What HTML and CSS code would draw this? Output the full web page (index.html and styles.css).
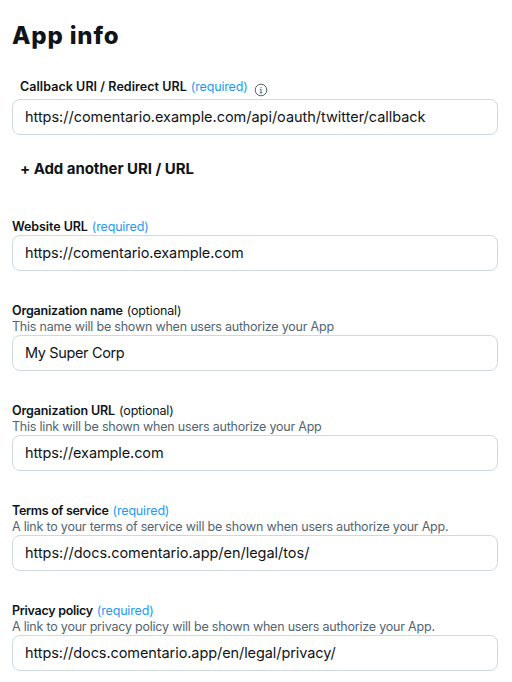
FILE: index.html
```html
<!DOCTYPE html>
<html lang="en">
<head>
<meta charset="utf-8">
<title>App info</title>
<link rel="stylesheet" href="styles.css">
</head>
<body>
<main class="form">
<h1 class="title">App info</h1>
<section class="field callback">
<div class="label"><span class="name">Callback URI / Redirect URL</span><span class="required">(required)</span><svg class="info" viewBox="0 0 14 14"><circle cx="7" cy="7" r="5.8"/><path d="M7 6.2v3.8M5.8 6.3H7M5.7 9.9h2.6M7 3.9v1"/></svg></div>
<div class="input">https://comentario.example.com/api/oauth/twitter/callback</div>
</section>
<div class="add">+ Add another URI / URL</div>
<section class="field website">
<div class="label"><span class="name">Website URL</span><span class="required">(required)</span></div>
<div class="input">https://comentario.example.com</div>
</section>
<section class="field org-name">
<div class="label"><span class="name">Organization name</span><span class="optional">(optional)</span></div>
<div class="hint">This name will be shown when users authorize your App</div>
<div class="input">My Super Corp</div>
</section>
<section class="field org-url">
<div class="label"><span class="name">Organization URL</span><span class="optional">(optional)</span></div>
<div class="hint">This link will be shown when users authorize your App</div>
<div class="input">https://example.com</div>
</section>
<section class="field terms">
<div class="label"><span class="name">Terms of service</span><span class="required">(required)</span></div>
<div class="hint">A link to your terms of service will be shown when users authorize your App.</div>
<div class="input">https://docs.comentario.app/en/legal/tos/</div>
</section>
<section class="field privacy">
<div class="label"><span class="name">Privacy policy</span><span class="required">(required)</span></div>
<div class="hint">A link to your privacy policy will be shown when users authorize your App.</div>
<div class="input">https://docs.comentario.app/en/legal/privacy/</div>
</section>
</main>
</body>
</html>
```
FILE: styles.css
```css
* { box-sizing: border-box; }
body { margin: 0; background: #fff; color: #0f1419; font-family: Inter, sans-serif; }
.form { padding: 21px 14px 0 12px; }
.title { margin: 0; font-size: 24px; line-height: 30px; font-weight: 800; letter-spacing: .85px; }
.field { margin-bottom: 31px; }
.callback { margin: 27px 0 0; }
.label { display: flex; gap: 4px; height: 16px; font-size: 12.5px; line-height: 18px; white-space: nowrap; letter-spacing: -.17px; }
.callback .label { height: 21px; padding-left: 8px; }
.name { font-weight: 600; letter-spacing: -.08px; }
.callback .name { letter-spacing: .06px; }
.org-name .name { letter-spacing: -.19px; }
.org-url .name { letter-spacing: -.12px; }
.terms .name { letter-spacing: -.3px; }
.privacy .name { letter-spacing: -.28px; }
.required { color: #1d9bf0; }
.info { width: 14px; height: 14px; margin: 5px 0 0 2px; fill: none; stroke: #536471; stroke-width: 1; }
.hint { height: 16px; font-size: 12.5px; line-height: 18px; color: #536471; white-space: nowrap; letter-spacing: -.21px; }
.input { height: 36px; margin-top: 1px; border: 1px solid #cfd9de; border-radius: 8px; padding: 0 12px; font-size: 14.5px; line-height: 34px; white-space: nowrap; letter-spacing: -.03px; }
.callback .input { margin-top: 0; }
.website .input { letter-spacing: -.12px; }
.org-name .input { letter-spacing: -.36px; }
.org-url .input { letter-spacing: -.1px; }
.privacy .input { letter-spacing: -.08px; }
.add { margin: 24px 0 39px; padding-left: 8px; font-size: 15px; line-height: 20px; font-weight: 700; letter-spacing: -.05px; }
```
